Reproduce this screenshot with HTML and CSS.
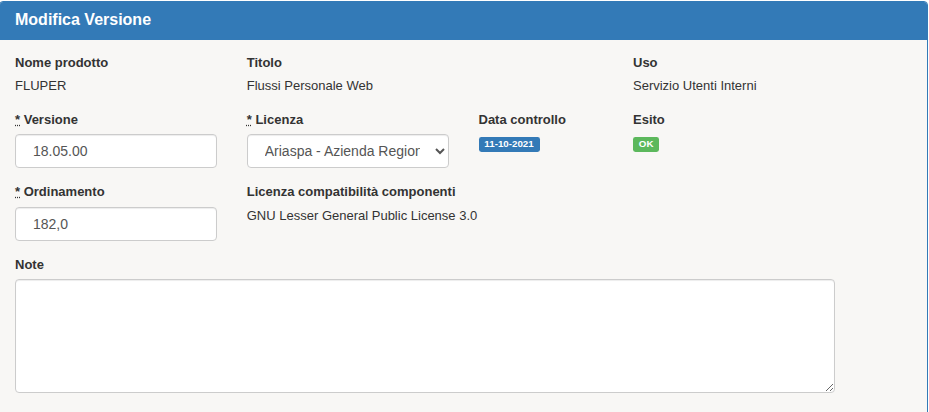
FILE: index.html
```html
<!DOCTYPE html>
<html lang="it">
<head>
<meta charset="utf-8">
<title>Modifica Versione</title>
<link rel="stylesheet" href="styles.css">
</head>
<body>
<div class="panel">
  <div class="panel-heading">
    <h3 class="panel-title">Modifica Versione</h3>
  </div>
  <div class="panel-body">
    <div class="row">
      <div class="col span-3">
        <label class="lbl">Nome prodotto</label>
        <p class="val">FLUPER</p>
      </div>
      <div class="col span-5">
        <label class="lbl">Titolo</label>
        <p class="val">Flussi Personale Web</p>
      </div>
      <div class="col span-4">
        <label class="lbl">Uso</label>
        <p class="val">Servizio Utenti Interni</p>
      </div>
    </div>
    <div class="row">
      <div class="col span-3">
        <label class="lbl"><abbr class="req" title="obbligatorio">*</abbr> Versione</label>
        <input class="ctrl" type="text" value="18.05.00">
      </div>
      <div class="col span-3">
        <label class="lbl"><abbr class="req" title="obbligatorio">*</abbr> Licenza</label>
        <select class="ctrl sel">
          <option>Ariaspa - Azienda Regionale Centrale Acquisti</option>
        </select>
      </div>
      <div class="col span-2">
        <label class="lbl">Data controllo</label>
        <p class="val"><span class="badge badge-primary">11-10-2021</span></p>
      </div>
      <div class="col span-2">
        <label class="lbl">Esito</label>
        <p class="val"><span class="badge badge-success">OK</span></p>
      </div>
    </div>
    <div class="row">
      <div class="col span-3">
        <label class="lbl"><abbr class="req" title="obbligatorio">*</abbr> Ordinamento</label>
        <input class="ctrl" type="text" value="182,0">
      </div>
      <div class="col span-5">
        <label class="lbl">Licenza compatibilità componenti</label>
        <p class="val">GNU Lesser General Public License 3.0</p>
      </div>
    </div>
    <div class="row">
      <div class="col span-11">
        <label class="lbl">Note</label>
        <textarea class="ctrl area"></textarea>
      </div>
    </div>
  </div>
</div>
</body>
</html>
```

FILE: styles.css
```css
* { box-sizing: border-box; }

html, body {
  margin: 0;
  padding: 0;
  background: #ffffff;
  font-family: "Liberation Sans", Arial, Helvetica, sans-serif;
  font-size: 13px;
  line-height: 1.42857;
  color: #333333;
}

.panel {
  margin-top: 1px;
  margin-left: -1px;
  width: 929px;
  min-height: 430px;
  border: 1px solid #337ab7;
  border-radius: 4px;
  background: #f8f7f5;
  overflow: hidden;
}

.panel-heading {
  background: #337ab7;
  color: #ffffff;
  padding: 10px 15px;
  border-bottom: 1px solid #337ab7;
  margin-top: -1px;
}

.panel-title {
  margin: 0;
  font-size: 16px;
  line-height: 1.1;
  font-weight: bold;
}

.panel-body {
  padding: 14px 15px 15px;
}

.row {
  display: grid;
  grid-template-columns: repeat(12, 1fr);
  margin: 0 -15px;
}

.col {
  padding: 0 15px;
  margin-bottom: 15px;
  min-width: 0;
}

.span-2 { grid-column: span 2; }
.span-3 { grid-column: span 3; }
.span-4 { grid-column: span 4; }
.span-5 { grid-column: span 5; }
.span-11 { grid-column: span 11; }

.lbl {
  display: block;
  font-weight: bold;
  margin-bottom: 5px;
}

.req {
  text-decoration: underline dotted;
  cursor: help;
}

.val {
  margin: 0;
  min-height: 18.57px;
}

.ctrl {
  display: block;
  width: 100%;
  height: 34px;
  padding: 6px 12px 6px 17px;
  font-family: "Liberation Sans", Arial, Helvetica, sans-serif;
  font-size: 14px;
  line-height: 1.42857;
  color: #555555;
  background: #ffffff;
  border: 1px solid #cccccc;
  border-radius: 4px;
  box-shadow: inset 0 1px 1px rgba(0, 0, 0, 0.075);
}

.sel {
  padding-left: 13px;
}

.area {
  height: 114px;
  resize: both;
}

.badge {
  display: inline-block;
  padding: 0.2em 0.6em 0.3em;
  font-size: 75%;
  font-weight: bold;
  line-height: 1;
  color: #ffffff;
  text-align: center;
  white-space: nowrap;
  vertical-align: baseline;
  border-radius: 0.25em;
}

.badge-primary { background: #337ab7; }
.badge-success { background: #5cb85c; }
```
